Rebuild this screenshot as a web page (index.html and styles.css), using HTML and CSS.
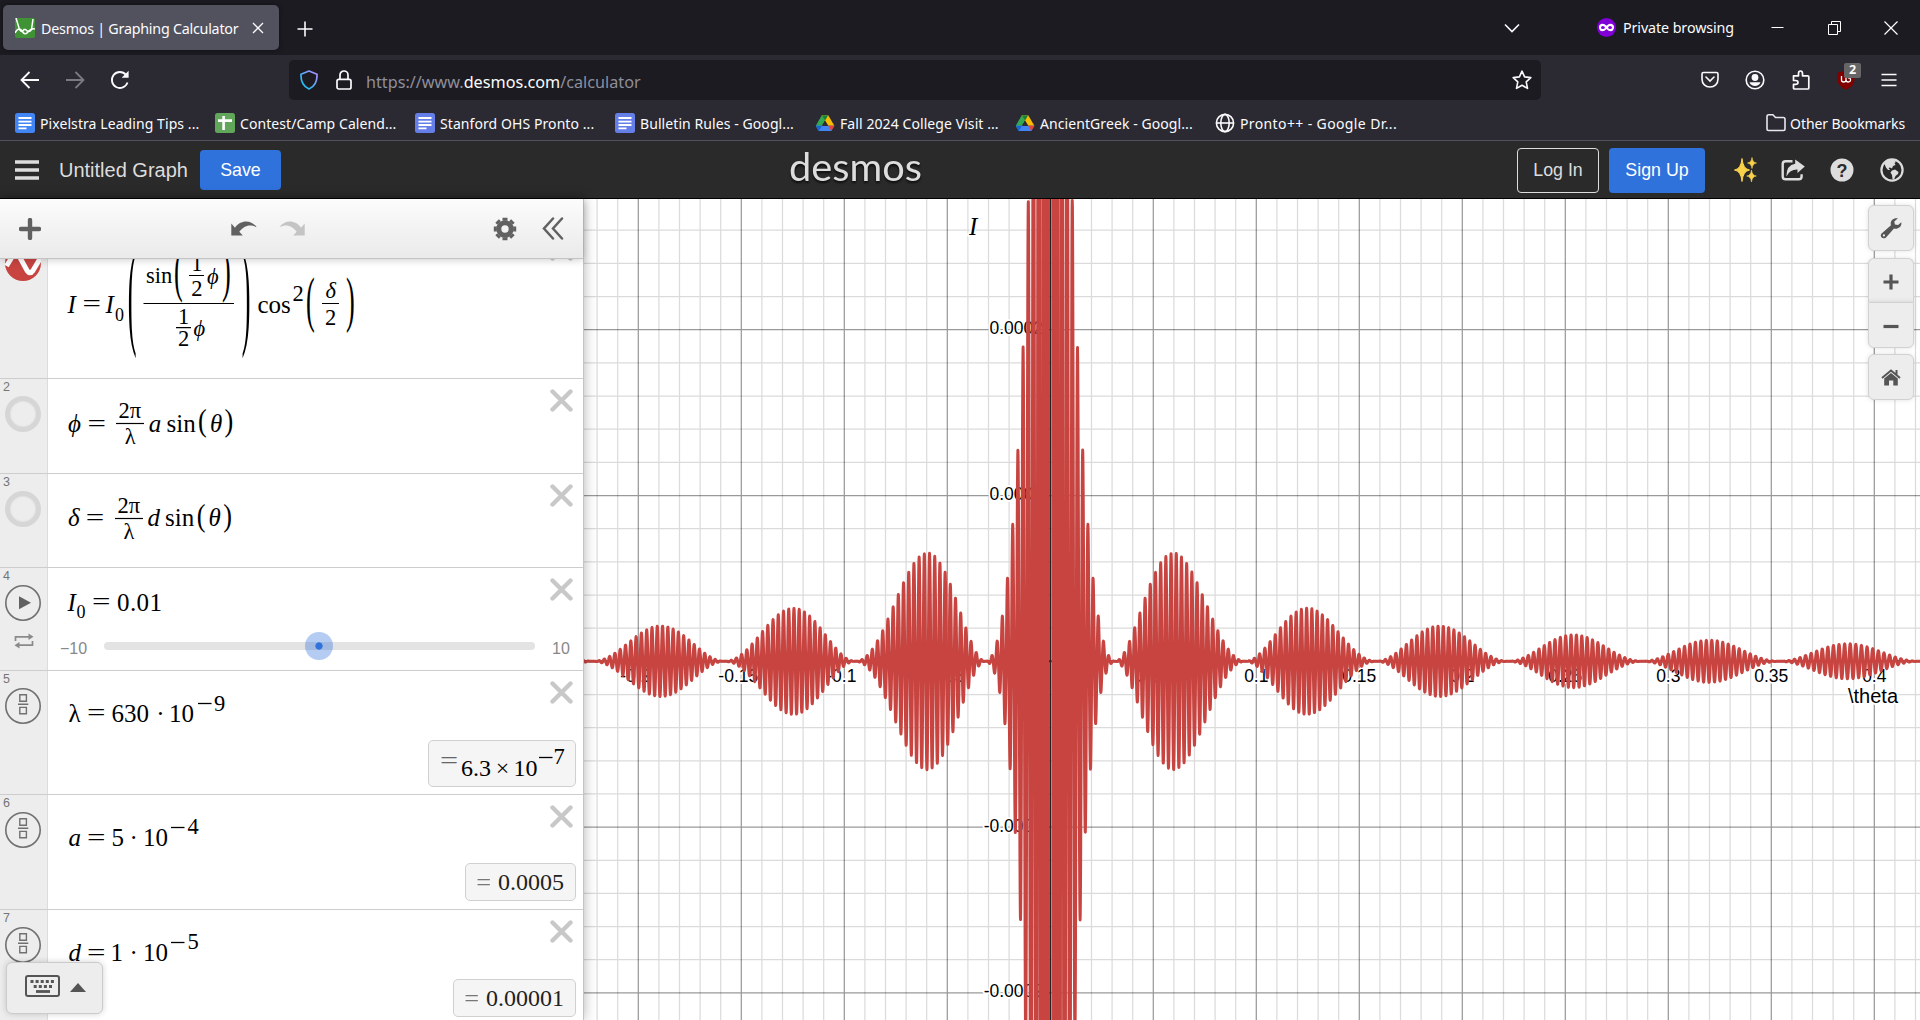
FILE: index.html
```html
<!DOCTYPE html>
<html lang="en">
<head>
<meta charset="utf-8">
<title>Desmos | Graphing Calculator</title>
<link rel="stylesheet" href="styles.css">
</head>
<body>
<svg class="defs" width="0" height="0" aria-hidden="true">
  <symbol id="doc" viewBox="0 0 20 20"><rect width="20" height="20" rx="2.5" fill="currentColor"/><path d="M3.5 5h13M3.5 8.6h13M3.5 12h13M3.5 15.4h8" stroke="#fff" stroke-width="1.9"/></symbol>
  <symbol id="drive" viewBox="0 0 20 20"><path d="M6.8 2.2h6.4L3.9 18 .8 12.7z" fill="#34a853"/><path d="M6.8 2.2h6.4l6.2 10.5h-6.2z" fill="#fbbc04"/><path d="M6.8 2.2h6.4L10 7.8z" fill="#188038"/><path d="M.8 12.7h18.6L16.2 18H3.9z" fill="#4285f4"/><path d="M13.2 12.7h6.2L16.2 18z" fill="#ea4335"/><path d="M.8 12.7H7L3.9 18z" fill="#1967d2"/><path d="M10 7.8l3 4.9H7z" fill="#2b2a33"/></symbol>
  <symbol id="cross" viewBox="0 0 23 23"><path d="M2.5 2.5l18 18M20.5 2.5l-18 18" stroke="#c8c8c8" stroke-width="4.4" stroke-linecap="round"/></symbol>
  <symbol id="fraction" viewBox="0 0 36 36"><circle cx="18" cy="18" r="17.2" fill="none" stroke="#707070" stroke-width="1.6"/><path d="M14.8 6.8h6.6v6.4h-6.6zM14.8 19.4h6.6v6.4h-6.6zM13 16.3h10.3" fill="none" stroke="#707070" stroke-width="1.4"/></symbol>
</svg>

<header class="tabs">
  <div class="tab">
    <svg class="favicon" width="20" height="20" viewBox="0 0 20 20"><rect width="20" height="20" rx="2" fill="#3f9334"/><path d="M1 0l3.500 11.500q2 4 4.500 0h1.500q3.500 4 6 0L18 1M0 15q4-7 7-2t6 1 7-3" fill="none" stroke="#fff" stroke-width="1.500"/></svg>
    <span class="tab-title">Desmos | Graphing Calculator</span>
    <svg width="12" height="12" viewBox="0 0 12 12"><path d="M1 1l10 10M11 1L1 11" stroke="#fbfbfe" stroke-width="1.300"/></svg>
  </div>
  <svg class="new-tab" width="16" height="16" viewBox="0 0 16 16"><path d="M8 .5v15M.5 8h15" stroke="#fbfbfe" stroke-width="1.600"/></svg>
  <div class="window-tools">
    <svg class="all-tabs" width="16" height="10" viewBox="0 0 16 10"><path d="M1 1.500l7 7 7-7" fill="none" stroke="#fbfbfe" stroke-width="1.600"/></svg>
    <svg width="19" height="19" viewBox="0 0 19 19"><circle cx="9.500" cy="9.500" r="9.500" fill="#8000d7"/><path d="M9.500 7.700Q7.500 5.500 5 5.800 1.800 6.500 2 9.500q.4 3.700 3.200 3.800Q7.600 13.300 9.500 11q1.900 2.300 4.300 2.300 2.800-.1 3.200-3.800.2-3-3-3.700-2.500-.3-4.500 1.900z" fill="#fff"/><ellipse cx="5.900" cy="9.500" rx="1.900" ry="1.500" fill="#8000d7"/><ellipse cx="13.100" cy="9.500" rx="1.900" ry="1.500" fill="#8000d7"/></svg>
    <span class="private">Private browsing</span>
    <svg class="minimize" width="13" height="14" viewBox="0 0 13 14"><path d="M.5 6.500h12" stroke="#fff"/></svg>
    <svg class="restore" width="13" height="14" viewBox="0 0 13 14"><path d="M3.500 3.500v-3h9v10h-3M.5 3.500h9v10h-9z" fill="none" stroke="#fff"/></svg>
    <svg width="14" height="14" viewBox="0 0 14 14"><path d="M.5.500l13 13M13.500.500l-13 13" stroke="#fff" stroke-width="1.200"/></svg>
  </div>
</header>

<nav class="navbar">
  <div class="history">
    <svg width="20" height="20" viewBox="0 0 20 20" fill="none" stroke="#fbfbfe" stroke-width="1.800"><path d="M19 10H2M9.500 2L1.500 10l8 8"/></svg>
    <svg width="20" height="20" viewBox="0 0 20 20" fill="none" stroke="#7b7a83" stroke-width="1.800"><path d="M1 10h17M10.500 2l8 8-8 8"/></svg>
    <svg width="20" height="20" viewBox="0 0 20 20"><path d="M17.500 12.500A8 8 0 1 1 16 4.800" fill="none" stroke="#fbfbfe" stroke-width="1.800"/><path d="M18.600.8v7h-7z" fill="#fbfbfe"/></svg>
  </div>
  <div class="urlbar">
    <svg width="18" height="20" viewBox="0 0 18 20"><defs><linearGradient id="shield" x1="0" y1="1" x2="1" y2="0"><stop offset="0" stop-color="#00d0f0"/><stop offset=".5" stop-color="#5aa8f8"/><stop offset="1" stop-color="#b88cff"/></linearGradient></defs><path d="M9 1l8 3.300c.3 6.500-1.500 12-8 14.700C2.500 16.300.700 10.800 1 4.300z" fill="none" stroke="url(#shield)" stroke-width="1.700" stroke-linejoin="round"/></svg>
    <svg class="lock" width="16" height="20" viewBox="0 0 16 20"><path d="M4 9.500V5a4 4 0 0 1 8 0v4.500" fill="none" stroke="#fbfbfe" stroke-width="1.700"/><rect x="1" y="9.300" width="14" height="9.700" rx="1.800" fill="none" stroke="#fbfbfe" stroke-width="1.700"/></svg>
    <span class="url">https://www.<b>desmos.com</b>/calculator</span>
    <svg class="star" width="20" height="20" viewBox="0 0 20 20"><path d="M10 1.200l2.600 5.700 6.200.7-4.600 4.200 1.300 6.600-5.500-3.200-5.500 3.200 1.300-6.600L1.200 7.600l6.200-.7z" fill="none" stroke="#fbfbfe" stroke-width="1.600" stroke-linejoin="round"/></svg>
  </div>
  <div class="extensions">
    <svg width="18" height="18" viewBox="0 0 18 18" fill="none" stroke="#fbfbfe" stroke-width="1.600"><path d="M2.500 1.500h13q1.500 0 1.500 1.500v5c0 5-3.500 8-8 8s-8-3-8-8V3q0-1.500 1.500-1.500z"/><path d="M5 6l4 4 4-4" stroke-linecap="round"/></svg>
    <svg width="20" height="20" viewBox="0 0 20 20"><circle cx="10" cy="10" r="8.800" fill="none" stroke="#fbfbfe" stroke-width="1.600"/><circle cx="10" cy="7.500" r="3.400" fill="#fbfbfe"/><path d="M4.500 12.200h11c-.8 2.500-3 3.800-5.500 3.800s-4.700-1.300-5.500-3.800z" fill="#fbfbfe"/></svg>
    <svg width="20" height="20" viewBox="0 0 20 20"><path d="M2.500 5.800h5V3.500q0-2.500 2-2.500t2 2.500v2.300h5.300q1 0 1 1V18q0 1-1 1H3.500q-1 0-1-1v-3.700h2.200q2.300 0 2.300-1.900t-2.300-1.900H2.500z" fill="none" stroke="#fbfbfe" stroke-width="1.700" stroke-linejoin="round"/></svg>
    <div class="ublock">
      <svg width="18" height="20" viewBox="0 0 18 20"><path d="M9 .5l8.500 2.300v6c0 5.500-3 8.500-8.500 11C3.500 17.300.500 14.300.500 8.800v-6z" fill="#800000"/><path d="M4.500 6v4q0 2 2.200 2T9 10V7M9 10q0 2 2.300 2t2.200-2.300Q13.500 7.500 11 8" fill="none" stroke="#fff" stroke-width="1.300"/></svg>
      <span class="badge">2</span>
    </div>
    <svg width="16" height="14" viewBox="0 0 16 14"><path d="M.5 1.500h15M.5 7h15M.5 12.500h15" stroke="#fbfbfe" stroke-width="1.500"/></svg>
  </div>
</nav>

<div class="bookmarks">
  <div class="bookmark"><svg class="blue" width="20" height="20"><use href="#doc"/></svg><span>Pixelstra Leading Tips ...</span></div>
  <div class="bookmark"><svg width="20" height="20" viewBox="0 0 20 20"><rect width="20" height="20" rx="2.500" fill="#62a65b"/><path d="M8.600 3v14M3 7.600h14" stroke="#fff" stroke-width="2.600"/></svg><span>Contest/Camp Calend...</span></div>
  <div class="bookmark"><svg class="indigo" width="20" height="20"><use href="#doc"/></svg><span>Stanford OHS Pronto ...</span></div>
  <div class="bookmark"><svg class="indigo" width="20" height="20"><use href="#doc"/></svg><span>Bulletin Rules - Googl...</span></div>
  <div class="bookmark"><svg width="20" height="20"><use href="#drive"/></svg><span>Fall 2024 College Visit ...</span></div>
  <div class="bookmark"><svg width="20" height="20"><use href="#drive"/></svg><span>AncientGreek - Googl...</span></div>
  <div class="bookmark site"><svg width="20" height="20" viewBox="0 0 20 20" fill="none" stroke="#fbfbfe" stroke-width="1.600"><circle cx="10" cy="10" r="8.600"/><ellipse cx="10" cy="10" rx="4.200" ry="8.600"/><path d="M1.500 10h17"/></svg><span>Pronto++ - Google Dr...</span></div>
  <div class="bookmark other"><svg width="20" height="20" viewBox="0 0 20 20"><path d="M1 3.500q0-1.700 1.700-1.700h4.200l2.600 2.700h7.800Q19 4.500 19 6.200v9.600q0 1.700-1.700 1.700H2.700Q1 17.500 1 15.800z" fill="none" stroke="#e8e8ee" stroke-width="1.600"/></svg><span>Other Bookmarks</span></div>
</div>

<div class="app-header">
  <svg class="menu" width="24" height="20" viewBox="0 0 24 20"><path d="M0 2h24M0 10h24M0 18h24" stroke="#ddd" stroke-width="3.600"/></svg>
  <span class="graph-name">Untitled Graph</span>
  <button class="btn save">Save</button>
  <svg class="logo" width="140" height="40" viewBox="0 0 140 40"><text x="3" y="31.200" textLength="133" lengthAdjust="spacingAndGlyphs">desmos</text></svg>
  <div class="account">
    <button class="btn login">Log In</button>
    <button class="btn signup">Sign Up</button>
    <svg class="sparkle" width="24" height="28" viewBox="0 0 24 28" fill="#f9d24a"><path d="M9 2.500Q10 13 16.500 14 10 15 9 25.500 8 15 1.500 14 8 13 9 2.500z" stroke="#f9d24a"/><path d="M19 1.500q.6 5 4.500 5.500-3.900.5-4.500 5.500-.6-5-4.500-5.500 3.900-.5 4.500-5.500zM18.500 14q.6 5.500 4.800 6-4.200.5-4.800 6-.6-5.500-4.800-6 4.200-.5 4.800-6z" stroke="#f9d24a" stroke-width=".6"/></svg>
    <svg class="share" width="24" height="22" viewBox="0 0 24 22"><path d="M11.500 2.300H4.500Q1.700 2.300 1.700 5v12.500q0 2.700 2.800 2.700h13.300q2.800 0 2.800-2.700v-2.300" fill="none" stroke="#ddd" stroke-width="2.400"/><path d="M14.200.5l9.600 6.900-7.300 6.700v-3.600Q9 10.200 5.300 17.500 5.500 6 14.200 4.800z" fill="#ddd"/></svg>
    <svg class="help" width="24" height="24" viewBox="0 0 24 24"><circle cx="12" cy="12" r="11.500" fill="#ddd"/><text x="12" y="18.500" text-anchor="middle">?</text></svg>
    <svg width="24" height="24" viewBox="0 0 24 24"><circle cx="12" cy="12" r="10.600" fill="none" stroke="#ddd" stroke-width="2.200"/><path d="M6 3.500Q10 0 14 2l2 2-1.500 1 1 2-2.500 1-1 2.500-2-1-1.500.5 1.500 2h-2L6 9.500 4.500 6zM12 12.500l3-1 3.500 2.500-.5 2-2.500 2L14 21.500l-1.500-.5-.5-4-1.500-2.500z" fill="#ddd"/></svg>
  </div>
</div>

<main class="calculator">
  <section class="panel">
    <div class="toolbar">
      <svg class="add" width="22" height="22" viewBox="0 0 22 22"><path d="M11 2v18M2 11h18" stroke="#616161" stroke-width="4.400" stroke-linecap="round"/></svg>
      <svg class="undo" width="26" height="16" viewBox="0 0 26 16"><path id="arrow" d="M.3 2.500L4 6.800C9-1 20-2 25.700 6.300 18 2.500 12.500 5.500 8.300 10.800L11.800 14.500H.3z" fill="#616161"/></svg>
      <svg class="redo" width="26" height="16" viewBox="0 0 26 16"><path d="M25.700 2.500L22 6.800C17-1 6-2 .3 6.300 8 2.500 13.500 5.500 17.700 10.800L14.200 14.500h11.500z" fill="#c4c4c4"/></svg>
      <svg class="gear" width="24" height="24" viewBox="0 0 24 24"><g fill="none" stroke="#616161"><circle cx="12" cy="12" r="6.200" stroke-width="5"/><path d="M12 .8v3M12 20.200v3M.8 12h3M20.200 12h3M4.100 4.100l2 2M17.900 17.900l2 2M19.900 4.100l-2 2M6.100 17.900l-2 2" stroke-width="5"/></g></svg>
      <svg width="22" height="23" viewBox="0 0 22 23"><path d="M11 1.500l-9 10 9 10M20 1.500l-9 10 9 10" fill="none" stroke="#616161" stroke-width="2.500" stroke-linecap="round"/></svg>
    </div>

    <div class="expressions">
      <div class="row row-1">
        <div class="gutter"><span class="num"></span><svg width="36" height="36" viewBox="0 0 36 36"><circle cx="18" cy="18" r="18" fill="#c74440"/><path d="M1.500 21L9.500 8q1.500-2 3 0l9.500 17.500q3 4.500 6 0L36 12" fill="none" stroke="#fff" stroke-width="5"/></svg></div>
        <svg class="math" width="400" height="150" viewBox="0 0 400 150">
          <text class="it" x="19.500" y="85.500">I</text><text x="34.500" y="84.500" textLength="18.500" lengthAdjust="spacingAndGlyphs">=</text><text class="it" x="57.500" y="85.500">I</text><text class="sub" x="67" y="93.500">0</text>
          <text transform="translate(79.700 106) scale(1.050 4.760)">(</text>
          <text class="frac" x="98" y="56.300">sin</text>
          <text transform="translate(126 62.800) scale(1.050 2.350)">(</text>
          <text class="frac mid" x="148.800" y="43.800">1</text><path d="M141 48.500h15M95.500 76.500h90.500M128 100.700h15M274 76.500h17"/><text class="frac mid" x="148.800" y="68.800">2</text>
          <text class="frac it" x="159" y="56.500">ϕ</text>
          <text transform="translate(174 62.800) scale(1.050 2.350)">)</text>
          <text class="frac mid" x="135.600" y="96.500">1</text><text class="frac mid" x="135.600" y="119.300">2</text><text class="frac it" x="145.500" y="108.800">ϕ</text>
          <text transform="translate(193.700 106) scale(1.050 4.760)">)</text>
          <text x="209.500" y="85.500">cos</text><text class="sup" x="244.500" y="74">2</text>
          <text transform="translate(258.100 92.800) scale(1.050 2.430)">(</text>
          <text class="frac it mid" x="282.700" y="71.300">δ</text><text class="frac mid" x="282.500" y="97.700">2</text>
          <text transform="translate(297.900 92.800) scale(1.050 2.430)">)</text>
        </svg>
        <svg class="delete" width="23" height="23"><use href="#cross"/></svg>
      </div>

      <div class="row row-2">
        <div class="gutter"><span class="num">2</span><span class="hidden-plot"></span></div>
        <svg class="math" width="400" height="94" viewBox="0 0 400 94">
          <text class="it" x="20" y="54">ϕ</text><text x="39.500" y="53.500" textLength="18.500" lengthAdjust="spacingAndGlyphs">=</text>
          <text class="frac" x="70.500" y="39.700">2π</text><path d="M68 45.500h28"/><text class="frac mid" x="82.200" y="65.700">λ</text>
          <text class="it" x="100.800" y="53.700">a</text><text x="118.500" y="53.700">sin</text>
          <text transform="translate(150.100 53) scale(1.050 1.286)">(</text><text class="it" x="162" y="53.700">θ</text><text transform="translate(176.600 53) scale(1.050 1.286)">)</text>
        </svg>
        <svg class="delete" width="23" height="23"><use href="#cross"/></svg>
      </div>

      <div class="row row-3">
        <div class="gutter"><span class="num">3</span><span class="hidden-plot"></span></div>
        <svg class="math" width="400" height="93" viewBox="0 0 400 93">
          <text class="it" x="20" y="52.700">δ</text><text x="37.700" y="53" textLength="18.500" lengthAdjust="spacingAndGlyphs">=</text>
          <text class="frac" x="69.500" y="40">2π</text><path d="M67 45.500h28"/><text class="frac mid" x="81" y="65.700">λ</text>
          <text class="it" x="99.500" y="53">d</text><text x="117" y="53">sin</text>
          <text transform="translate(148.700 53) scale(1.050 1.286)">(</text><text class="it" x="160.500" y="53">θ</text><text transform="translate(175.200 53) scale(1.050 1.286)">)</text>
        </svg>
        <svg class="delete" width="23" height="23"><use href="#cross"/></svg>
      </div>

      <div class="row row-4">
        <div class="gutter"><span class="num">4</span>
          <svg width="36" height="36" viewBox="0 0 36 36"><circle cx="18" cy="18" r="17.200" fill="none" stroke="#707070" stroke-width="1.600"/><path d="M14 11.300v13L26 17.800z" fill="#616161"/></svg>
          <svg class="loop" width="20" height="18" viewBox="0 0 20 18"><path d="M1.500 9V4.800H16M18.500 9v4.200H4" fill="none" stroke="#8a8a8a" stroke-width="1.700"/><path d="M14.500 1.500L19.500 4.800l-5 3.300zM5.500 9.900L.5 13.200l5 3.300z" fill="#8a8a8a"/></svg>
        </div>
        <div class="slider-body">
          <svg class="math" width="400" height="60" viewBox="0 0 400 60">
            <text class="it" x="19.500" y="43.800">I</text><text class="sub" x="28.500" y="51">0</text><text x="44" y="42.800" textLength="18.500" lengthAdjust="spacingAndGlyphs">=</text><text x="69" y="43.800" textLength="45">0.01</text>
          </svg>
          <div class="slider"><span class="min">−10</span><div class="track"><div class="thumb"></div></div><span>10</span></div>
        </div>
        <svg class="delete" width="23" height="23"><use href="#cross"/></svg>
      </div>

      <div class="row row-5">
        <div class="gutter"><span class="num">5</span><svg width="36" height="36"><use href="#fraction"/></svg></div>
        <svg class="math" width="300" height="90" viewBox="0 0 300 90">
          <text x="20.500" y="51.500">λ</text><text x="39" y="51" textLength="18.500" lengthAdjust="spacingAndGlyphs">=</text><text x="63.500" y="51.500">630</text><text class="mid" x="112.300" y="51.500">·</text><text x="121" y="51.500">10</text><path class="minus" d="M150 33.500h13.500"/><text class="sup" x="166" y="41">9</text>
        </svg>
        <svg class="delete" width="23" height="23"><use href="#cross"/></svg>
        <div class="result tall">
          <svg class="math" width="146" height="45" viewBox="0 0 146 45"><text class="eq" x="10" y="28.500" textLength="16.500" lengthAdjust="spacingAndGlyphs">=</text><text class="val" x="32" y="34.500">6.3</text><text class="val mid" x="73.500" y="34.500">×</text><text class="val" x="84.500" y="34.500">10</text><path class="minus" d="M110 16.500h13.500"/><text class="sup" x="124.500" y="22.500">7</text></svg>
        </div>
      </div>

      <div class="row row-6">
        <div class="gutter"><span class="num">6</span><svg width="36" height="36"><use href="#fraction"/></svg></div>
        <svg class="math" width="300" height="90" viewBox="0 0 300 90">
          <text class="it" x="20.500" y="51.700">a</text><text x="39" y="51.500" textLength="18.500" lengthAdjust="spacingAndGlyphs">=</text><text x="63.500" y="51.700">5</text><text class="mid" x="85.600" y="51.700">·</text><text x="95" y="51.700">10</text><path class="minus" d="M123 33.500h13.500"/><text class="sup" x="139.500" y="40.300">4</text>
        </svg>
        <svg class="delete" width="23" height="23"><use href="#cross"/></svg>
        <div class="result"><span class="eq">=</span><span>0.0005</span></div>
      </div>

      <div class="row row-7">
        <div class="gutter"><span class="num">7</span><svg width="36" height="36"><use href="#fraction"/></svg></div>
        <svg class="math" width="300" height="90" viewBox="0 0 300 90">
          <text class="it" x="20.500" y="52">d</text><text x="39" y="51.500" textLength="18.500" lengthAdjust="spacingAndGlyphs">=</text><text x="62.500" y="52">1</text><text class="mid" x="85.600" y="52">·</text><text x="95" y="52">10</text><path class="minus" d="M123 33.500h13.500"/><text class="sup" x="139.500" y="40.300">5</text>
        </svg>
        <svg class="delete" width="23" height="23"><use href="#cross"/></svg>
        <div class="result"><span class="eq">=</span><span>0.00001</span></div>
      </div>
    </div>

    <div class="keypad">
      <svg width="35" height="22" viewBox="0 0 35 22"><rect x="1" y="1" width="33" height="20" rx="2" fill="none" stroke="#555" stroke-width="2"/><path d="M5.500 6.500h24M8.700 11.500h18.300" stroke="#555" stroke-width="3" stroke-dasharray="3 2.100"/><path d="M11 16.500h14" stroke="#555" stroke-width="2.800"/></svg>
      <svg width="16" height="9" viewBox="0 0 16 9"><path d="M8 0l8 9H0z" fill="#555"/></svg>
    </div>
  </section>

  <section class="graph">
    <svg id="plot" width="1336" height="821" viewBox="584 199 1336 821">
      <g id="grid"></g>
      <g class="labels" id="labels"></g>
      <path id="curve"/>
    </svg>
    <div class="controls">
      <div class="control"><svg width="22" height="22" viewBox="0 0 22 22"><path d="M1.600 16.500L11 8.200C9.700 4 13 .3 18 1.300l-3.700 3.300.6 3 3.200.4 3.200-2.700c.7 4.200-3.100 7.300-7.300 6.300L6 20.500C3 23-1 19.500 1.600 16.500z" fill="#555"/><circle cx="3.900" cy="18.400" r="1.100" fill="#ededed"/></svg></div>
      <div class="zoom">
        <div class="control"><svg width="16" height="16" viewBox="0 0 16 16"><path d="M8 .5v15M.5 8h15" stroke="#555" stroke-width="3.200"/></svg></div>
        <div class="control"><svg width="16" height="16" viewBox="0 0 16 16"><path d="M.5 8.500h15" stroke="#555" stroke-width="3.200"/></svg></div>
      </div>
      <div class="control"><svg width="20" height="17" viewBox="0 0 20 17"><path d="M1 9l9-7.500L19 9M15.500 1v5" fill="none" stroke="#555" stroke-width="2"/><path d="M3.200 9.500L10 4l6.800 5.500V16.500h-4.500v-5H8v5H3.200z" fill="#555"/></svg></div>
    </div>
  </section>
</main>
<script src="plot.js"></script>
</body>
</html>
```
FILE: styles.css
```css
* { box-sizing: border-box; }
body {
  margin: 0;
  width: 1920px;
  height: 1020px;
  overflow: hidden;
  display: flex;
  flex-direction: column;
  background: #fff;
  color: #fbfbfe;
  font-family: "Noto Sans", "Open Sans", sans-serif;
  font-size: 14px;
}
svg { display: block; flex: none; }
.defs { position: absolute; }
button { font: inherit; }

/* Browser tab strip */
.tabs { height: 55px; flex: none; display: flex; align-items: center; background: #1c1b22; }
.tab {
  margin-left: 3px;
  width: 276px;
  height: 45px;
  padding: 0 15px 0 12px;
  display: flex;
  align-items: center;
  border-radius: 5px;
  background: #52525e;
  box-shadow: 0 0 4px rgba(0, 0, 0, .5);
}
.tab-title { margin: 2px auto 0 6px; white-space: nowrap; font-size: 14.3px; letter-spacing: -.24px; }
.new-tab { margin: 3px 0 0 18px; }
.window-tools { margin-left: auto; padding-right: 22px; display: flex; align-items: center; }
.all-tabs { margin-right: 77px; }
.private { width: 110px; margin: 0 38px 0 7px; white-space: nowrap; font-size: 14.3px; letter-spacing: -.1px; }
.minimize { margin-right: 44px; }
.restore { margin-right: 43px; }

/* Navigation bar */
.navbar { height: 50px; flex: none; display: flex; align-items: center; background: #2b2a33; }
.history { width: 289px; padding-left: 20px; display: flex; gap: 25px; }
.urlbar {
  width: 1252px;
  height: 40px;
  padding: 0 9px 0 11px;
  display: flex;
  align-items: center;
  border-radius: 5px;
  background: #1c1b22;
}
.lock { margin-left: 18px; }
.url { margin: 4px auto 0 14px; font-size: 16.2px; color: #8f8f9b; }
.url b { font-weight: 400; color: #fbfbfe; }
.extensions { margin-left: 160px; display: flex; align-items: center; gap: 26px; }
.ublock { position: relative; }
.badge {
  position: absolute;
  left: 7px;
  top: -7px;
  width: 17px;
  height: 15px;
  border-radius: 2px;
  background: #666;
  font-size: 12.5px;
  font-weight: 700;
  line-height: 14px;
  text-align: center;
}

/* Bookmarks bar */
.bookmarks {
  height: 36px;
  flex: none;
  padding: 0 15px;
  display: flex;
  align-items: center;
  background: #2b2a33;
  border-bottom: 1px solid #52525e;
}
.bookmark { width: 200px; display: flex; align-items: center; gap: 5px; white-space: nowrap; letter-spacing: .08px; }
.bookmark span { padding-top: 1px; }
.bookmark.site { letter-spacing: .38px; }
.bookmark.other { width: auto; margin-left: auto; gap: 4px; letter-spacing: -.1px; }
.blue { color: #4285f4; }
.indigo { color: #667fe8; }

/* Calculator header */
.app-header {
  height: 58px;
  flex: none;
  padding: 1px 16px 0;
  display: flex;
  align-items: center;
  background: #2a2a2a;
  border-bottom: 1px solid #000;
  color: #ddd;
  font: 17.8px "Liberation Sans", sans-serif;
}
.menu { margin-left: -1px; }
.graph-name { margin-left: 20px; width: 127px; font-size: 20px; white-space: nowrap; }
.btn { padding: 0; border: 0; border-radius: 4px; background: #2f72dc; color: #fff; }
.save { margin-left: 14px; width: 81px; height: 40px; }
.logo { margin-left: 505px; overflow: visible; filter: drop-shadow(0 2px 1px rgba(0, 0, 0, .7)); }
.logo text { font: 38px Lato, sans-serif; fill: #ddd; }
.account { margin-left: auto; display: flex; align-items: center; }
.login { width: 82px; height: 45px; border: 1px solid #ddd; background: none; color: #ddd; }
.signup { width: 96px; height: 45px; margin-left: 10px; }
.sparkle { margin-left: 28px; }
.share { margin-left: 24px; }
.help { margin: 0 26px 0 25px; }
.help text { font: 700 18px "Liberation Sans", sans-serif; fill: #2a2a2a; }

/* Expression panel */
.calculator { flex: 1; min-height: 0; display: flex; }
.panel {
  position: relative;
  z-index: 1;
  width: 584px;
  flex: none;
  display: flex;
  flex-direction: column;
  overflow: clip;
  overflow-clip-margin: 20px;
  background: #fff;
  border-right: 1px solid #c4c4c4;
  box-shadow: 0 0 12px rgba(0, 0, 0, .3);
}
.toolbar {
  position: relative;
  z-index: 1;
  height: 60px;
  flex: none;
  padding: 0 19px;
  display: flex;
  align-items: center;
  background: linear-gradient(#fcfcfc, #eaeaea);
  border-bottom: 1px solid #c4c4c4;
  box-shadow: 0 1px 8px rgba(0, 0, 0, .2);
}
.undo { margin-left: 190px; }
.redo { margin: 0 auto 0 22px; }
.gear { margin-right: 25px; }
.expressions { flex: 1; min-height: 0; margin-top: -31px; }
.row { display: flex; align-items: flex-start; position: relative; border-bottom: 1px solid #cdcdcd; }
.row-1 { height: 151px; }
.row-2 { height: 95px; }
.row-3 { height: 94px; }
.row-4 { height: 103px; }
.row-5 { height: 124px; }
.row-6 { height: 115px; }
.row-7 { height: 114px; border-bottom: 0; }
.gutter {
  width: 48px;
  height: 100%;
  flex: none;
  padding-left: 5px;
  background: #ededed;
  border-right: 1px solid #dcdcdc;
  color: #757575;
  font: 12.5px/17px "Liberation Sans", sans-serif;
}
.num { display: block; height: 17px; margin: 0 0 0 -2px; }
.hidden-plot { display: block; width: 36px; height: 36px; border: 5.5px solid #d6d6d6; border-radius: 50%; box-shadow: inset 0 0 2px #ccc; }
.loop { margin: 11px 0 0 9px; }
.delete { margin: 10px 10px 0 auto; }

/* Math notation */
.math { margin-top: -1px; font: 25px "Liberation Serif", serif; fill: #000; stroke: none; }
.math path { stroke: #000; stroke-width: 1.2; }
.math .minus { stroke-width: 1.3; }
.math .it { font-style: italic; }
.math .frac { font-size: 22.5px; }
.math .sup { font-size: 22.5px; }
.math .sub { font-size: 18px; }
.math .mid { text-anchor: middle; }
.math .val { font-size: 24px; }
.math .eq { fill: #666; }

.slider-body { width: 527px; margin-right: -37px; }
.slider {
  height: 34px;
  padding: 3px 0 0 12px;
  display: flex;
  align-items: center;
  color: #888;
  font: 16px "Liberation Sans", sans-serif;
}
.slider span { position: relative; top: 3px; }
.min { width: 44px; }
.track { width: 431px; height: 8px; margin-right: 17px; padding-right: 1px; border-radius: 4px; background: #e3e3e3; display: flex; align-items: center; justify-content: center; }
.thumb {
  width: 28px;
  height: 28px;
  border-radius: 50%;
  background: radial-gradient(circle, #2f72dc 3.3px, rgba(47, 114, 220, .36) 4px);
}
.result {
  position: absolute;
  right: 7px;
  bottom: 8px;
  height: 38px;
  padding: 0 11px;
  display: flex;
  align-items: center;
  gap: 7px;
  border: 1px solid #d0d0d0;
  border-radius: 5px;
  background: #f5f5f5;
  color: #222;
  font: 24px "Liberation Serif", serif;
}
.result .eq { color: #777; transform: scaleX(1.1); }
.result.tall { height: 47px; width: 148px; bottom: 7px; padding: 0; }
.row-7 .result { bottom: 7px; }
.keypad {
  position: absolute;
  left: 6px;
  bottom: 6px;
  width: 97px;
  height: 52px;
  padding: 0 0 4px 18px;
  display: flex;
  align-items: center;
  gap: 10px;
  border: 1px solid #ccc;
  border-radius: 6px;
  background: #ededed;
  box-shadow: 0 0 6px rgba(0, 0, 0, .18);
}
.keypad svg:last-child { margin-top: 3px; }

/* Graph paper */
.graph { position: relative; flex: 1; }
.minor { stroke: rgba(0, 0, 0, .14); stroke-width: 1.25; fill: none; }
.major { stroke: rgba(0, 0, 0, .4); stroke-width: 1.25; fill: none; }
.axis { stroke: #222; stroke-width: 1.9; fill: none; }
#curve { fill: none; stroke: #c74440; stroke-width: 2.9; stroke-linejoin: round; }
.labels { font: 17.5px "Liberation Sans", sans-serif; fill: #000; stroke: #fff; stroke-width: 3.5; paint-order: stroke; stroke-linejoin: round; }
.labels .x-name { font-size: 20px; }
.labels .y-name { font: italic 25px "Liberation Serif", serif; }
.controls { position: absolute; right: 6px; top: 6px; display: flex; flex-direction: column; gap: 7px; }
.control { width: 46px; height: 46px; display: flex; align-items: center; justify-content: center; border: 1px solid #d2d2d2; border-radius: 6px; background: #ededed; box-shadow: 0 0 5px rgba(0, 0, 0, .12); }
.zoom { margin-bottom: -1px; }
.zoom .control:first-child { border-bottom: 0; border-radius: 6px 6px 0 0; height: 44px; padding-top: 3px; }
.zoom .control:last-child { border-radius: 0 0 6px 6px; padding-top: 2px; }
```
FILE: plot.js
```js
// Viewport: position of the origin and pixels per unit on each axis.
const originX = 1050.3;
const originY = 661.3;
const scaleX = 2060;
const scaleY = 1658000;
const left = 584, right = 1920, top_ = 199, bottom = 1020;

const grid = { minor: '', major: '', axis: '' };
for (let i = -22; i <= 42; i++) {
  const x = (originX + i * 0.01 * scaleX).toFixed(1);
  grid[i === 0 ? 'axis' : i % 5 ? 'minor' : 'major'] += `M${x} ${top_}V${bottom}`;
}
for (let i = -10; i <= 13; i++) {
  const y = (originY - i * 0.00002 * scaleY).toFixed(1);
  grid[i === 0 ? 'axis' : i % 5 ? 'minor' : 'major'] += `M${left} ${y}H${right}`;
}
document.getElementById('grid').innerHTML =
  Object.entries(grid).map(([name, d]) => `<path class="${name}" d="${d}"/>`).join('');

let labels = '';
for (let i = -4; i <= 8; i++) {
  if (i === 0) continue;
  const value = Number((i * 0.05).toFixed(2));
  // Negative numbers are centred on their digits, with the sign hanging left.
  const x = originX + value * scaleX - (i < 0 ? 3 : 0);
  labels += `<text x="${x}" y="681.8" text-anchor="middle">${value}</text>`;
}
for (const i of [2, 1, -1, -2]) {
  labels += `<text x="1043" y="${originY - i * 0.0001 * scaleY + 4.5}" text-anchor="end">${(i * 0.0001).toFixed(4)}</text>`;
}
labels += '<text class="y-name" x="969" y="235">I</text><text class="x-name" x="1848" y="702.5">\\theta</text>';
document.getElementById('labels').innerHTML = labels;

// Single-slit envelope times the double-slit interference term.
const lambda = 630e-9, a = 5e-4, d = 1e-5, I0 = 0.01;
const points = [];
for (let x = left - 4; x <= right + 4; x += 0.15) {
  const s = Math.sin((x - originX) / scaleX);
  const half = Math.PI * a * s / lambda;
  const sinc = half === 0 ? 1 : Math.sin(half) / half;
  const I = I0 * sinc * Math.cos(Math.PI * d * s / lambda) ** 2;
  const y = Math.max(0, Math.min(1300, originY - I * scaleY));
  points.push(x.toFixed(2) + ' ' + y.toFixed(1));
}
document.getElementById('curve').setAttribute('d', 'M' + points.join('L'));
```
